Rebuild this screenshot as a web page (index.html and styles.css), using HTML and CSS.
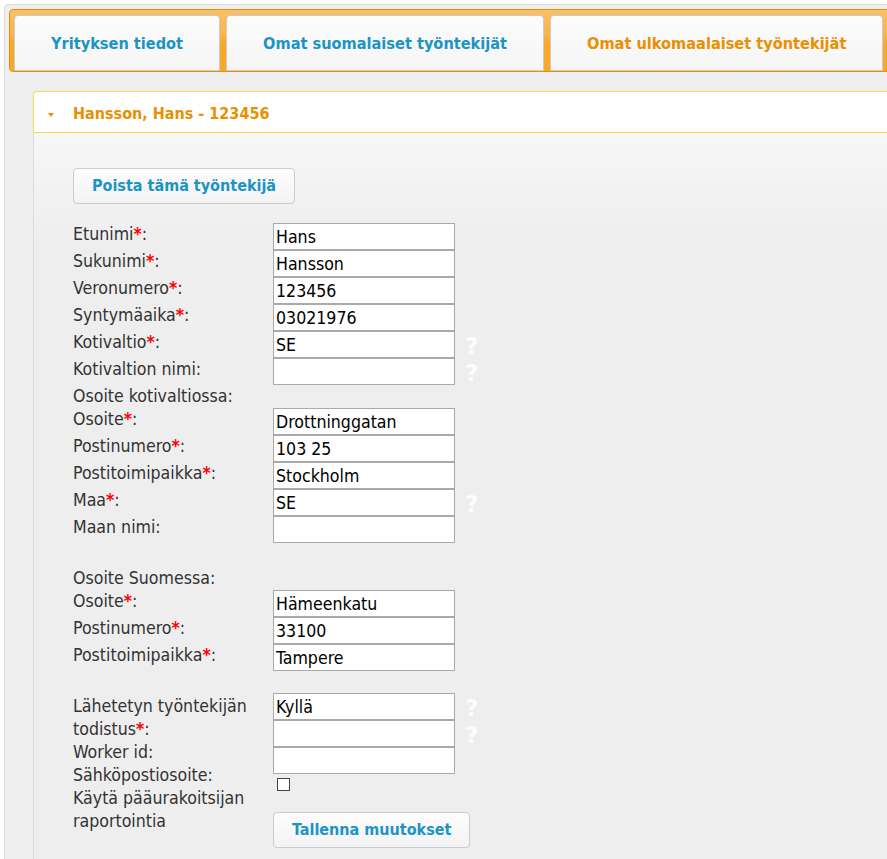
FILE: index.html
```html
<!DOCTYPE html>
<html lang="fi">
<head>
<meta charset="utf-8">
<title>Työntekijät</title>
<link rel="stylesheet" href="styles.css">
</head>
<body>
<div class="widget">
  <ul class="tabnav">
    <li class="tab"><a>Yrityksen tiedot</a></li>
    <li class="tab"><a>Omat suomalaiset työntekijät</a></li>
    <li class="tab active"><a>Omat ulkomaalaiset työntekijät</a></li>
  </ul>
  <div class="panel">
    <div class="acc-header"><span class="tri"></span>Hansson, Hans - 123456</div>
    <div class="acc-content">
      <button class="btn btn-top" type="button">Poista tämä työntekijä</button>

      <div class="form">
        <div class="lbl">Etunimi<b class="req">*</b>:</div>
        <div class="cell"><input class="field" value="Hans"></div>
        <div class="lbl">Sukunimi<b class="req">*</b>:</div>
        <div class="cell"><input class="field" value="Hansson"></div>
        <div class="lbl">Veronumero<b class="req">*</b>:</div>
        <div class="cell"><input class="field" value="123456"></div>
        <div class="lbl">Syntymäaika<b class="req">*</b>:</div>
        <div class="cell"><input class="field" value="03021976"></div>
        <div class="lbl">Kotivaltio<b class="req">*</b>:</div>
        <div class="cell"><input class="field" value="SE"><span class="help">?</span></div>
        <div class="lbl">Kotivaltion nimi:</div>
        <div class="cell"><input class="field" value=""><span class="help">?</span></div>
        <div class="lbl full">Osoite kotivaltiossa:</div>
        <div class="lbl">Osoite<b class="req">*</b>:</div>
        <div class="cell"><input class="field" value="Drottninggatan"></div>
        <div class="lbl">Postinumero<b class="req">*</b>:</div>
        <div class="cell"><input class="field" value="103 25"></div>
        <div class="lbl">Postitoimipaikka<b class="req">*</b>:</div>
        <div class="cell"><input class="field" value="Stockholm"></div>
        <div class="lbl">Maa<b class="req">*</b>:</div>
        <div class="cell"><input class="field" value="SE"><span class="help">?</span></div>
        <div class="lbl">Maan nimi:</div>
        <div class="cell"><input class="field" value=""></div>
      </div>

      <div class="form sec-fi">
        <div class="lbl full">Osoite Suomessa:</div>
        <div class="lbl">Osoite<b class="req">*</b>:</div>
        <div class="cell"><input class="field" value="Hämeenkatu"></div>
        <div class="lbl">Postinumero<b class="req">*</b>:</div>
        <div class="cell"><input class="field" value="33100"></div>
        <div class="lbl">Postitoimipaikka<b class="req">*</b>:</div>
        <div class="cell"><input class="field" value="Tampere"></div>
      </div>

      <div class="split">
        <div class="labels">
          <div>Lähetetyn työntekijän todistus<b class="req">*</b>:</div>
          <div>Worker id:</div>
          <div>Sähköpostiosoite:</div>
          <div>Käytä pääurakoitsijan raportointia</div>
        </div>
        <div class="inputs">
          <div class="cell"><input class="field" value="Kyllä"><span class="help">?</span></div>
          <div class="cell"><input class="field" value=""><span class="help">?</span></div>
          <div class="cell"><input class="field" value=""></div>
          <input class="check" type="checkbox">
          <button class="btn btn-save" type="button">Tallenna muutokset</button>
        </div>
      </div>
    </div>
  </div>
</div>
</body>
</html>
```

FILE: styles.css
```css
html, body {
  margin: 0;
  padding: 0;
  overflow: hidden;
  background: #fff;
}

body {
  font-family: "DejaVu Sans Condensed", "DejaVu Sans", "Liberation Sans", sans-serif;
  font-stretch: condensed;
  font-size: 17.6px;
  color: #333;
}

.widget {
  margin: 4px 0 0 4px;
  width: 940px;
  border: 1px solid #ddd;
  border-radius: 4px;
  background: #eee;
  padding: 4px;
}

.tabnav {
  list-style: none;
  margin: 0;
  padding: 4px 4px 0;
  display: flex;
  gap: 6px;
  border: 1px solid #e78f08;
  border-radius: 4px;
  background: linear-gradient(to bottom, #f9c066 0%, #f8b548 40%, #f6a828 55%, #f6a828 100%);
}

.tab {
  border: 1px solid #ccc;
  border-radius: 4px 4px 0 0;
  background: linear-gradient(to bottom, #fcfcfc, #f5f5f5);
  margin-top: 1px;
}

.tab a {
  display: block;
  padding: 17px 36px 16px;
  line-height: 21px;
  font-size: 16.2px;
  font-weight: bold;
  color: #1c94c4;
  white-space: nowrap;
}

.tab.active a {
  color: #eb8f00;
}

.panel {
  padding: 19px 0 0 24px;
}

.acc-header {
  border: 1px solid #fbd850;
  border-right: 0;
  border-radius: 4px 0 0 0;
  background: #fff;
  color: #eb8f00;
  font-size: 16px;
  font-weight: bold;
  line-height: 21px;
  padding: 11px 0 8px 39px;
  position: relative;
}

.tri {
  position: absolute;
  left: 14px;
  top: 21px;
  width: 0;
  height: 0;
  border-left: 3.5px solid transparent;
  border-right: 3.5px solid transparent;
  border-top: 4px solid #ef8c08;
}

.acc-content {
  border-left: 1px solid #ddd;
  background: linear-gradient(to bottom, #f7f7f7 0, #eeeeee 110px);
  padding: 35px 0 20px 39px;
}

.btn {
  font: inherit;
  font-size: 16px;
  font-weight: bold;
  color: #1c94c4;
  border: 1px solid #ccc;
  border-radius: 4px;
  background: linear-gradient(to bottom, #fdfdfd, #f3f3f3);
  padding: 7px 18px;
  line-height: 20px;
  display: block;
}

.btn-top {
  margin-bottom: 19px;
}

.form {
  display: grid;
  grid-template-columns: 200px auto;
}

.lbl {
  line-height: 23px;
}

.lbl.full {
  grid-column: 1 / span 2;
}

.req {
  color: #f00;
}

.cell {
  display: flex;
  align-items: flex-start;
}

.field {
  box-sizing: border-box;
  width: 182px;
  height: 27px;
  margin: 0;
  border: 1px solid #aaa;
  padding: 0 2px;
  font: inherit;
  color: #000;
  background: #fff;
  outline: none;
}

.help {
  margin-left: 10px;
  padding-top: 3px;
  font-family: "DejaVu Sans", sans-serif;
  font-stretch: normal;
  font-weight: bold;
  font-size: 23px;
  line-height: 24px;
  color: #fcfcfc;
}

.sec-fi {
  margin-top: 24px;
}

.split {
  display: flex;
  margin-top: 22px;
}

.labels {
  width: 200px;
  padding-top: 2px;
  line-height: 23px;
}

.inputs {
  display: flex;
  flex-direction: column;
  align-items: flex-start;
}

.check {
  appearance: none;
  -webkit-appearance: none;
  box-sizing: border-box;
  width: 13px;
  height: 13px;
  margin: 4px 0 0 4px;
  border: 1px solid #444;
  background: #fff;
}

.btn-save {
  margin-top: 21px;
}
```
